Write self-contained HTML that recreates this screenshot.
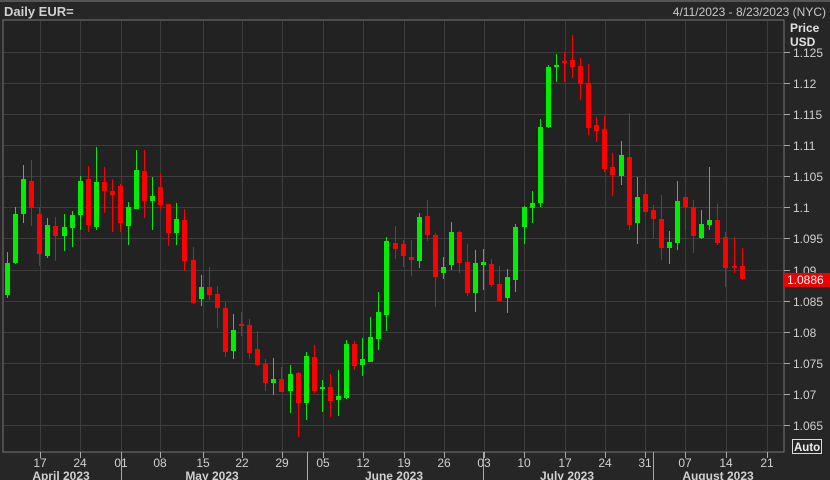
<!DOCTYPE html>
<html><head><meta charset="utf-8"><style>
html,body{margin:0;padding:0;background:#262626;width:830px;height:480px;overflow:hidden;font-family:"Liberation Sans",sans-serif;}
svg{position:absolute;left:0;top:0;}
</style></head><body>
<svg id="s" width="830" height="480" xmlns="http://www.w3.org/2000/svg" font-family="Liberation Sans, sans-serif">
<rect x="0" y="0" width="830" height="480" fill="#262626"/>
<rect x="0" y="0" width="830" height="2" fill="#555"/>
<rect x="3" y="20" width="781" height="432" fill="#222222" stroke="#777" stroke-width="1"/>
<g id="grid" stroke="#3d3d3d" stroke-width="1"></g>
<g id="c"></g>
<text x="4" y="16" fill="#d0d0d0" font-size="13" font-weight="bold">Daily EUR=</text>
<text x="826" y="16" fill="#c8c8c8" font-size="12" text-anchor="end">4/11/2023 - 8/23/2023 (NYC)</text>
<text x="790" y="32" fill="#e0e0e0" font-size="12" font-weight="bold">Price</text>
<text x="790" y="46" fill="#e0e0e0" font-size="12" font-weight="bold">USD</text>
<g id="ylab" fill="#d0d0d0" font-size="12"></g>
<rect x="784" y="273" width="46" height="14" fill="#ee0000"/>
<text x="787" y="284" fill="#fff" font-size="12">1.0886</text>
<rect x="792.5" y="439.5" width="29" height="14" fill="none" stroke="#ddd"/>
<text x="794" y="451" fill="#eee" font-size="11.5" font-weight="bold">Auto</text>
<g id="xlab" fill="#d0d0d0" font-size="12" text-anchor="middle">
<text x="40" y="467">17</text><text x="80" y="467">24</text><text x="121" y="467">01</text><text x="160" y="467">08</text><text x="203" y="467">15</text><text x="242" y="467">22</text><text x="282" y="467">29</text><text x="323" y="467">05</text><text x="363" y="467">12</text><text x="404" y="467">19</text><text x="444" y="467">26</text><text x="484" y="467">03</text><text x="524" y="467">10</text><text x="565" y="467">17</text><text x="605" y="467">24</text><text x="645" y="467">31</text><text x="685" y="467">07</text><text x="726" y="467">14</text><text x="767" y="467">21</text>
<text x="61" y="480" font-weight="bold" font-size="12">April 2023</text>
<text x="212" y="480" font-weight="bold" font-size="12">May 2023</text>
<text x="394" y="480" font-weight="bold" font-size="12">June 2023</text>
<text x="567" y="480" font-weight="bold" font-size="12">July 2023</text>
<text x="718" y="480" font-weight="bold" font-size="12">August 2023</text>
</g>
<g id="tk" stroke="#aaa"></g>
</svg>
<script>
var NS="http://www.w3.org/2000/svg";
function el(p,t,a){var e=document.createElementNS(NS,t);for(var k in a)e.setAttribute(k,a[k]);p.appendChild(e);return e;}
var g=document.getElementById('grid'),tk=document.getElementById('tk'),yl=document.getElementById('ylab');
var xs=[40,80,121,160,203,242,282,323,363,404,444,484,524,565,605,645,685,726,767];
xs.forEach(function(x){el(g,'line',{x1:x+.5,y1:21,x2:x+.5,y2:451});el(tk,'line',{x1:x+.5,y1:452,x2:x+.5,y2:458});});
[121,307,483,653].forEach(function(x){el(tk,'line',{x1:x+.5,y1:452,x2:x+.5,y2:480});});
var labs=["1.125","1.12","1.115","1.11","1.105","1.1","1.095","1.09","1.085","1.08","1.075","1.07","1.065"];
labs.forEach(function(l,i){var y=Math.round(52+i*31.08);el(g,'line',{x1:4,y1:y+.5,x2:783,y2:y+.5});el(tk,'line',{x1:784,y1:y+.5,x2:790,y2:y+.5});var t=el(yl,'text',{x:793,y:y+5});t.textContent=l;});
var d=[[7,252,263,295,298,1],[15,207,214,263,264,1],[23,165,179,214,223,1],[31,160,181,208,226,0],[39,207,214,254,266,0],[47,218,225,256,258,1],[55,217,226,236,261,0],[64,214,227,236,251,1],[72,211,215,228,247,1],[80,176,181,215,230,1],[88,166,179,225,232,0],[96,147,182,227,230,1],[104,167,182,191,213,0],[112,179,191,195,232,0],[120,184,186,223,232,0],[128,202,207,226,245,1],[136,150,170,209,209,1],[144,150,171,201,218,0],[152,177,196,201,230,1],[160,174,187,205,209,0],[168,204,204,233,246,0],[176,203,219,233,245,1],[184,209,220,261,271,0],[193,247,260,303,304,0],[201,275,287,299,306,1],[209,267,287,295,300,0],[217,286,294,308,328,0],[225,302,308,352,357,0],[233,314,330,351,359,1],[241,312,324,326,336,0],[249,319,325,353,359,0],[257,331,349,365,366,0],[265,359,364,383,391,0],[273,358,379,383,395,1],[281,367,379,392,392,0],[290,365,374,391,413,1],[298,372,373,403,437,0],[306,352,356,403,420,1],[314,345,357,391,393,0],[322,380,387,389,412,1],[330,374,387,401,417,0],[338,370,396,400,416,1],[346,340,344,398,399,1],[354,341,344,366,370,0],[362,338,359,365,376,1],[370,317,337,362,362,1],[378,292,312,339,350,1],[386,237,241,315,331,1],[395,226,243,249,259,0],[403,240,244,256,267,0],[411,240,257,260,276,0],[419,213,217,261,268,1],[427,200,216,235,241,0],[435,233,235,277,307,0],[443,257,267,273,279,1],[451,222,232,265,270,1],[459,231,232,263,273,0],[467,244,262,293,296,0],[475,250,263,293,312,1],[483,249,262,265,290,1],[491,259,264,285,287,0],[499,266,284,301,302,0],[507,269,277,298,313,1],[515,224,227,280,292,1],[524,206,207,227,244,1],[532,191,203,208,223,1],[540,119,127,203,207,1],[548,65,67,127,128,1],[556,54,65,67,82,1],[564,52,61,62,82,0],[572,35,60,67,78,0],[580,58,66,84,100,0],[588,64,83,128,135,0],[596,117,125,131,142,0],[604,116,129,169,172,0],[612,153,167,175,196,0],[621,141,155,176,185,1],[629,113,157,225,230,0],[637,177,197,223,244,1],[645,178,194,212,213,0],[653,205,210,219,239,0],[661,195,219,248,260,0],[669,231,242,248,264,1],[677,181,201,243,250,1],[685,196,197,207,230,0],[693,200,207,236,253,0],[701,210,224,238,239,1],[709,167,220,225,230,1],[717,204,220,243,245,0],[725,232,237,268,287,0],[734,237,266,268,273,0],[742,248,266,279,280,0]];
var c=document.getElementById('c');
d.forEach(function(a){var col=a[5]?'#00ee00':'#ff0000';el(c,'rect',{x:a[0],y:a[1],width:1,height:a[4]-a[1],fill:col});el(c,'rect',{x:a[0]-2,y:a[2],width:5,height:Math.max(2,a[3]-a[2]),fill:col});});
</script>
</body></html>
